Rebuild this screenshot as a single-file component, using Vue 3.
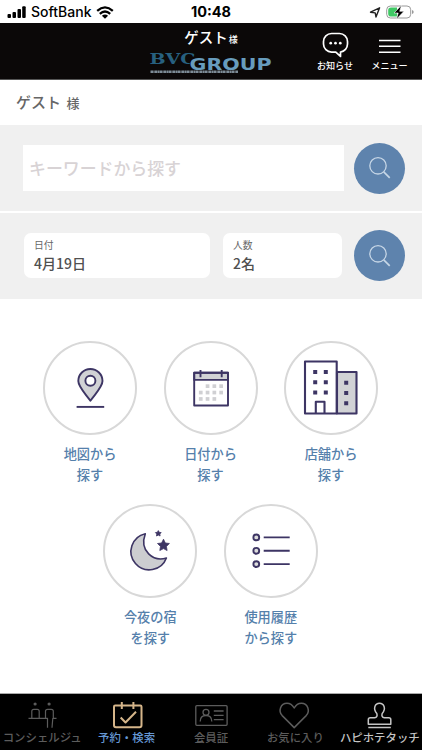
<script setup>
const shortcuts = [
  [
    { icon: 'map', lines: ['地図から', '探す'] },
    { icon: 'date', lines: ['日付から', '探す'] },
    { icon: 'shop', lines: ['店舗から', '探す'] },
  ],
  [
    { icon: 'night', lines: ['今夜の宿', 'を探す'] },
    { icon: 'history', lines: ['使用履歴', 'から探す'] },
  ],
]
const tabs = [
  { icon: 'concierge', label: 'コンシェルジュ', state: '' },
  { icon: 'reserve', label: '予約・検索', state: 'active' },
  { icon: 'card', label: '会員証', state: '' },
  { icon: 'heart', label: 'お気に入り', state: '' },
  { icon: 'stamp', label: 'ハピホテタッチ', state: 'light' },
]
// Day cells of the calendar icon as [column, row]
const days = [
  [1, 0], [2, 0], [3, 0],
  [0, 1], [1, 1], [2, 1], [3, 1],
  [0, 2], [1, 2], [2, 2],
]
</script>

<template>
  <div class="screen">
    <div class="status">
      <div class="carrier">
        <svg width="20" height="12" viewBox="0 0 20 12"><rect x="0.5" y="8" width="3.5" height="4" rx="1" /><rect x="5.5" y="6" width="3.5" height="6" rx="1" /><rect x="10.5" y="3" width="3.5" height="9" rx="1" /><rect x="15.2" y="0.3" width="3.5" height="11.7" rx="1" /></svg>
        <span>SoftBank</span>
        <svg class="wifi" width="18" height="13" viewBox="0 0 18 13"><path d="M1.2 4.8Q9-2 16.8 4.8M3.8 7.8Q9 3.3 14.2 7.8" fill="none" stroke="#000" stroke-width="2.3" /><path d="M5.9 9.7Q9 7.2 12.1 9.7L9 12.8Z" /></svg>
      </div>
      <div class="clock">10:48</div>
      <div class="power">
        <svg width="46" height="16" viewBox="0 0 46 16">
          <path d="M1.5 8.2 10.6 3.8 7 13 6.2 8.9Z" fill="none" stroke="#222" stroke-width="1.4" stroke-linejoin="round" />
          <rect x="17.7" y="2" width="24" height="12" rx="3.7" fill="#fff" stroke="#999" />
          <path d="M22 3.5h6v9h-6q-2.8 0-2.8-2.8V6.3q0-2.8 2.8-2.8Z" fill="#3fc864" />
          <path d="M43 6v4q1.7-.6 1.7-2T43 6Z" fill="#999" />
          <path d="M32.5 1.3 25 9h4.2l-1.8 6.2L35 7.3h-4.3Z" fill="#000" stroke="#fff" stroke-width=".6" />
        </svg>
      </div>
    </div>

    <header class="header">
      <div class="brand">
        <div class="user">ゲスト<small>様</small></div>
        <svg class="logo" width="126" height="24" viewBox="0 0 126 24">
          <text x="1.5" y="13" class="bvc" textLength="46" lengthAdjust="spacingAndGlyphs">BVC</text>
          <text x="41.5" y="18.5" class="group" textLength="82" lengthAdjust="spacingAndGlyphs">GROUP</text>
          <path d="M2.500 20.700H90" stroke="#7d8b96" stroke-width="2.400" stroke-dasharray="2.600 .4 1.200 .3" />
        </svg>
      </div>
      <div class="action notice">
        <svg width="28" height="26" viewBox="0 0 28 26" fill="none" stroke="#fff" stroke-width="1.700" stroke-linejoin="round"><path d="M10.500 1.500h8a8 8 0 0 1 8 8v2.600a8 8 0 0 1-7 7.950v4.400l-4.700-4.400H10.500a8 8 0 0 1-8-8V9.500a8 8 0 0 1 8-8Z" /><g fill="#fff" stroke="none"><circle cx="9.700" cy="11.200" r="1.350" /><circle cx="14.500" cy="11.200" r="1.350" /><circle cx="19.300" cy="11.200" r="1.350" /></g></svg>
        <span>お知らせ</span>
      </div>
      <div class="action menu">
        <svg width="22" height="26" viewBox="0 0 22 26"><path d="M0 8.500h21.500M0 14.300h21.500M0 20.300h21.500" stroke="#fff" stroke-width="1.600" /></svg>
        <span>メニュー</span>
      </div>
    </header>

    <div class="greeting">ゲスト <small>様</small></div>

    <section class="panel keyword">
      <div class="input">キーワードから探す</div>
      <div class="search"><svg width="24" height="24" viewBox="0 0 24 24" fill="none" stroke="#c6d6e6" stroke-width="1.3"><circle cx="10" cy="9.800" r="8.200" /><path d="M15.700 15.900l6 6" stroke-width="1.700" /></svg></div>
    </section>
    <section class="panel filter">
      <div class="field day"><span>日付</span><b>4月19日</b></div>
      <div class="field people"><span>人数</span><b>2名</b></div>
      <div class="search"><svg width="24" height="24" viewBox="0 0 24 24" fill="none" stroke="#c6d6e6" stroke-width="1.3"><circle cx="10" cy="9.800" r="8.200" /><path d="M15.700 15.900l6 6" stroke-width="1.700" /></svg></div>
    </section>

    <main class="shortcuts">
      <div v-for="(row, r) in shortcuts" :key="r" class="row">
        <div v-for="item in row" :key="item.icon" class="shortcut">
          <div class="ring">
            <svg width="90" height="90" viewBox="0 0 90 90" fill="none" stroke="#3d3564" stroke-width="1.900" stroke-linejoin="round">
              <g v-if="item.icon === 'map'">
                <path d="M45.400 57.800C40.500 50.800 33.300 44 33.300 38.100a12.100 12.100 0 0 1 24.200 0c0 5.900-7.200 12.700-12.100 19.700Z" fill="#d1d2d5" />
                <circle cx="45.400" cy="37.700" r="5" fill="#fff" />
                <path d="M31.600 63.900h27.600" />
              </g>
              <g v-else-if="item.icon === 'date'">
                <path d="M28.200 29.700h33.800v7.200H28.200Z" fill="#d1d2d5" />
                <path d="M28.200 29.700h33.800v32.800H28.200ZM34.500 27v7.200M55.700 27v7.200" />
                <rect v-for="([c, y], i) in days" :key="i" :x="32.9 + c * 6.8" :y="41.3 + y * 6.4" width="3.700" height="3.700" fill="#d0d0d3" stroke="none" />
              </g>
              <g v-else-if="item.icon === 'shop'" stroke-width="2.100">
                <path d="M51 29H70.500v41.500H51Z" fill="#d1d2d5" />
                <path d="M19 18.500H50.700v52H19ZM29.800 70.500V58.800h8.700V70.500" />
                <path d="M27.200 29h4M37.800 29h4M27.200 39.200h4M37.800 39.200h4M27.200 49.400h4M37.800 49.400h4M58.200 39.800h4M58.200 50h4M58.200 60.200h4" stroke-width="4" />
              </g>
              <g v-else-if="item.icon === 'night'">
                <path d="M40.300 27.700A18.300 18.300 0 1 0 61.400 52C48.500 56 34 45 40.300 27.700Z" fill="#cccdd0" stroke-width="1.600" />
                <path d="m58.500 33.200 1.800 3.800 4.100.5-3 2.900.7 4.100-3.600-1.900-3.700 1.900.7-4.100-3-2.900 4.100-.5ZM53.300 24.600l.9 1.700 2 .3-1.400 1.400.3 2-1.800-.9-1.800.9.3-2-1.400-1.400 2-.3Z" fill="#3d3564" stroke-width=".8" />
              </g>
              <g v-else>
                <circle cx="30.300" cy="31.400" r="2.900" fill="#ddd" /><circle cx="30.300" cy="44.800" r="2.900" fill="#ddd" /><circle cx="30.300" cy="58.100" r="2.900" fill="#ddd" />
                <path d="M37.700 31.400h26M37.700 44.800h26M37.700 58.100h26" />
              </g>
            </svg>
          </div>
          <p><template v-for="(line, i) in item.lines" :key="i"><br v-if="i">{{ line }}</template></p>
        </div>
      </div>
    </main>

    <nav class="tabs">
      <div v-for="tab in tabs" :key="tab.icon" class="tab" :class="tab.state">
        <svg width="32" height="28" viewBox="0 0 32 28" fill="none" stroke="currentColor" stroke-width="1.300" stroke-linejoin="round">
          <g v-if="tab.icon === 'concierge'" stroke-width="1.200">
            <circle cx="9.100" cy="3" r="1.600" fill="currentColor" stroke="none" /><circle cx="23.100" cy="3" r="1.600" fill="currentColor" stroke="none" />
            <path d="M2.500 17.300H21.500V26.700M5.800 17.300V10.300q0-2 2-2h3.400q2 0 2 2v7M19.500 17.300V10.300q0-2 2-2h3.800q2 0 2 2v7M30.500 17.300h-3.700L26 26.700" />
          </g>
          <g v-else-if="tab.icon === 'reserve'" stroke-width="2">
            <path d="M5 4.500H4.200q-1.200 0-1.200 1.200V24.200q0 2 2 2h23.500q2 0 2-2V5.700q0-1.200-1.200-1.200ZM10.800 1v7M22.400 1v7M9.700 16.500l4.800 5 10.500-10.700" />
          </g>
          <g v-else-if="tab.icon === 'card'">
            <rect x=".8" y="4.700" width="31.300" height="19.600" rx="1" /><circle cx="11" cy="11.300" r="3" /><path d="M5.200 20.500q0-6 5.800-6t5.800 6M18.800 10h9.800M18.800 14.300h9.800M18.800 18.700h9.800" />
          </g>
          <path v-else-if="tab.icon === 'heart'" stroke-width="1.500" d="M15.200 26.600 3.200 14.600C-1 10 1.500 2.200 8 2.200c3.600 0 5.600 2 7.200 4.800 1.600-2.800 3.600-4.800 7.200-4.800 6.500 0 9 7.800 4.800 12.400Z" />
          <g v-else stroke-width="1.500">
            <path d="M4.300 23.300v-4.500q0-2 2-2h4.200q3.500-.8 2.300-4.300C8.500 7.500 11.200 2.200 15.500 2.200s7 5.300 2.700 10.300q-1.200 3.500 2.300 4.300h4.300q2 0 2 2v4.500ZM4.300 26.500h22.500" />
          </g>
        </svg>
        <span>{{ tab.label }}</span>
      </div>
    </nav>
  </div>
</template>

<style>
body { margin: 0; background: #fff; }
</style>

<style scoped>
* { box-sizing: border-box; }
svg { display: block; flex: none; overflow: visible; }
.screen { width: 422px; height: 750px; display: flex; flex-direction: column; overflow: hidden; background: #fff; font-family: "Liberation Sans", "Noto Sans CJK JP", sans-serif; color: #666; }
.status { height: 23px; flex: none; display: grid; grid-template-columns: 1fr auto 1fr; align-items: center; padding: 1px 7px 0 7px; color: #000; font: 500 14px/22px Inter, sans-serif; }
.carrier { display: flex; align-items: center; gap: 4px; }
.wifi { margin-left: 1px; }
.clock { font-weight: 700; font-size: 14.500px; }
.power { justify-self: end; }
.header { height: 57px; flex: none; display: grid; grid-template-columns: 126px 1fr 54px 55px 5px; background: #0b0808; color: #fff; border-bottom: 1px solid #555; }
.brand { grid-column: 1 / 3; padding: 5px 0 0 148px; }
.user { width: 126px; height: 23px; text-align: center; font: 500 14.500px/18px "Noto Sans CJK JP", sans-serif; white-space: nowrap; }
.user small { font-size: 9px; margin-left: 1px; }
.bvc { font: 700 14.500px "DejaVu Serif", serif; fill: #27607f; }
.group { font: 700 15.200px "DejaVu Sans", sans-serif; fill: #679cbd; stroke: #0b0808; stroke-width: 1px; paint-order: stroke; }
.action { display: flex; flex-direction: column; align-items: center; gap: 1px; padding-top: 9px; font: 500 9.100px/13px "Noto Sans CJK JP", sans-serif; white-space: nowrap; }
.greeting { height: 45px; flex: none; padding: 9px 0 0 16px; font: 500 15px/26px "Noto Sans CJK JP", sans-serif; }
.greeting small { font-size: 13px; margin-left: 2px; }
.panel { flex: none; display: flex; align-items: center; background: #f0f0f0; }
.keyword { height: 86px; padding-left: 23px; margin-bottom: 2px; }
.input { width: 321px; height: 46px; margin-right: 10px; padding-left: 6px; background: #fff; color: #d8d3d5; font: 500 16.900px/46px "Noto Sans CJK JP", sans-serif; }
.search { width: 51px; height: 51px; border-radius: 50%; background: #5e83ad; display: grid; place-items: center; }
.filter { height: 85.500px; padding-left: 24px; }
.field { height: 45px; border-radius: 7px; background: #fff; padding: 4px 10px; display: flex; flex-direction: column; }
.field span { font: 400 9.800px/16px "Noto Sans CJK JP", sans-serif; }
.field b { color: #505050; font: 500 14px/21px "Noto Sans CJK JP", sans-serif; }
.day { width: 186px; margin-right: 13px; }
.people { width: 119px; margin-right: 12px; }
.shortcuts { flex: 1; padding: 42.500px 1px 0 0; }
.row { display: flex; justify-content: center; gap: 26.500px; height: 163px; }
.shortcut { width: 94px; text-align: center; }
.ring { width: 94px; height: 94px; border: 2px solid #d8d8d8; border-radius: 50%; display: grid; place-items: center; }
.shortcut p { margin: 7.500px 0 0; color: #5580ab; font: 500 13.200px/21px "Noto Sans CJK JP", sans-serif; }
.tabs { height: 57px; flex: none; display: grid; grid-template-columns: repeat(5, 1fr); background: #000; border-top: 1px solid #aaa; }
.tab { display: flex; flex-direction: column; align-items: center; padding-top: 7px; color: #5c5c5c; font: 500 11.400px/17px "Noto Sans CJK JP", sans-serif; white-space: nowrap; }
.tab.active { color: #d5b58a; }
.tab.active span { color: #6597d3; }
.tab.light { color: #c5c5c5; }
</style>
